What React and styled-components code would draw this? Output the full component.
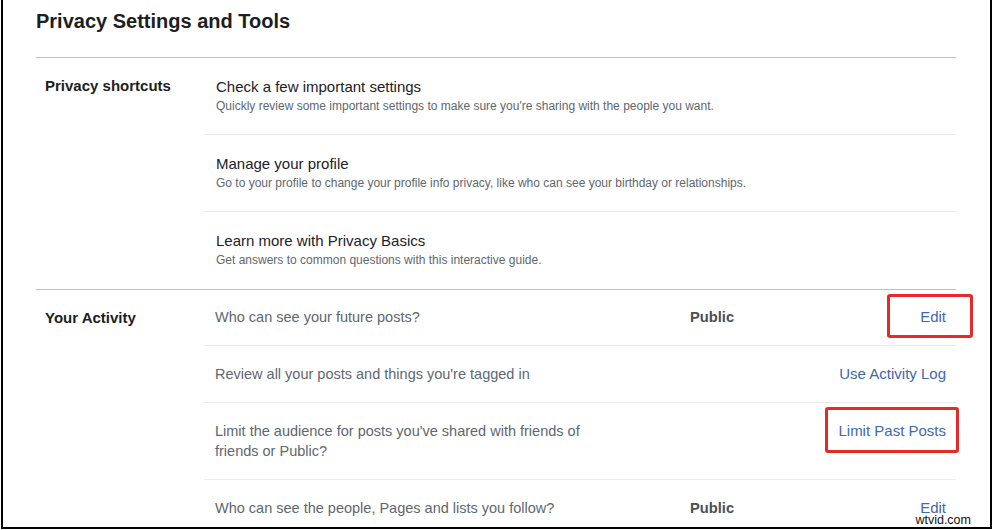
import React from "react";
import styled, { createGlobalStyle } from "styled-components";

const Global = createGlobalStyle`
  html, body { margin: 0; padding: 0; background: #fff; overflow: hidden; }
  body { font-family: "Liberation Sans", Arial, sans-serif; }
`;

const Frame = styled.div`
  position: relative;
  box-sizing: border-box;
  margin-left: 1px;
  width: 991px;
  height: 529px;
  border: 2px solid #000;
  border-top: none;
  overflow: hidden;
  padding: 0 34px 0 33px;
  background: #fff;
`;

const Title = styled.h1`
  margin: 0;
  padding: 9px 0 24px;
  font-size: 20px;
  line-height: 24px;
  font-weight: 700;
  color: #1c1e21;
`;

const Section = styled.section`
  display: grid;
  grid-template-columns: 168px 1fr;
  border-top: 1px solid #bdbdbd;
`;

const Label = styled.div`
  padding: ${(p) => p.$top}px 0 0 9px;
  font-size: 15px;
  line-height: 18px;
  font-weight: 700;
  color: #1c1e21;
`;

const List = styled.div`
  display: flex;
  flex-direction: column;
`;

const Shortcut = styled.div`
  padding: 20px 12px ${(p) => (p.$last ? 21 : 20)}px;
  border-top: ${(p) => (p.$first ? "none" : "1px solid #e9ebee")};
`;

const ShortcutTitle = styled.div`
  font-size: 15px;
  line-height: 18px;
  color: #1d2129;
`;

const ShortcutSub = styled.div`
  margin-top: 2px;
  font-size: 12px;
  line-height: 16px;
  color: #606770;
`;

const Row = styled.div`
  display: flex;
  align-items: flex-start;
  padding: ${(p) => (p.$first ? 17 : 18)}px 10px 18px 11px;
  border-top: ${(p) => (p.$first ? "none" : "1px solid #e9ebee")};
`;

const RowTextCell = styled.div`
  flex: 0 0 475px;
`;

const RowText = styled.div`
  max-width: 385px;
  font-size: 14.5px;
  line-height: 20px;
  color: #606770;
`;

const Value = styled.div`
  flex: 1;
  font-size: 14.7px;
  line-height: 20px;
  font-weight: 700;
  color: #4b4f56;
`;

const Action = styled.a`
  position: relative;
  font-size: 15px;
  line-height: 20px;
  color: #4267b2;
  text-decoration: none;
  white-space: nowrap;
`;

const Highlight = styled.span`
  position: absolute;
  top: ${(p) => p.$t}px;
  bottom: ${(p) => p.$b}px;
  left: ${(p) => p.$l}px;
  right: ${(p) => p.$r}px;
  border: 3px solid #e62a2a;
  border-radius: 3px;
  pointer-events: none;
`;

const Watermark = styled.div`
  position: absolute;
  right: 17px;
  bottom: 0;
  padding: 0 2px;
  background: #fff;
  font-family: "Liberation Sans", Arial, sans-serif;
  font-size: 12.5px;
  line-height: 14px;
  color: #111;
`;

const shortcuts = [
  {
    title: "Check a few important settings",
    sub: "Quickly review some important settings to make sure you're sharing with the people you want.",
  },
  {
    title: "Manage your profile",
    sub: "Go to your profile to change your profile info privacy, like who can see your birthday or relationships.",
  },
  {
    title: "Learn more with Privacy Basics",
    sub: "Get answers to common questions with this interactive guide.",
  },
];

const activity = [
  { text: "Who can see your future posts?", value: "Public", action: "Edit", box: { t: -13, b: -11, l: -33, r: -27 } },
  { text: "Review all your posts and things you're tagged in", value: "", action: "Use Activity Log" },
  {
    text: "Limit the audience for posts you've shared with friends of friends or Public?",
    value: "",
    action: "Limit Past Posts",
    box: { t: -14, b: -12, l: -13, r: -13 },
  },
  { text: "Who can see the people, Pages and lists you follow?", value: "Public", action: "Edit" },
];

export default function App() {
  return (
    <>
      <Global />
      <Frame>
        <Title>Privacy Settings and Tools</Title>
        <Section>
          <Label $top={19}>Privacy shortcuts</Label>
          <List>
            {shortcuts.map((s, i) => (
              <Shortcut key={s.title} $first={i === 0} $last={i === shortcuts.length - 1}>
                <ShortcutTitle>{s.title}</ShortcutTitle>
                <ShortcutSub>{s.sub}</ShortcutSub>
              </Shortcut>
            ))}
          </List>
        </Section>
        <Section>
          <Label $top={19}>Your Activity</Label>
          <List>
            {activity.map((r, i) => (
              <Row key={r.text} $first={i === 0}>
                <RowTextCell>
                  <RowText>{r.text}</RowText>
                </RowTextCell>
                <Value>{r.value}</Value>
                <Action href="#">
                  {r.action}
                  {r.box && <Highlight $t={r.box.t} $b={r.box.b} $l={r.box.l} $r={r.box.r} />}
                </Action>
              </Row>
            ))}
          </List>
        </Section>
        <Watermark>wtvid.com</Watermark>
      </Frame>
    </>
  );
}
